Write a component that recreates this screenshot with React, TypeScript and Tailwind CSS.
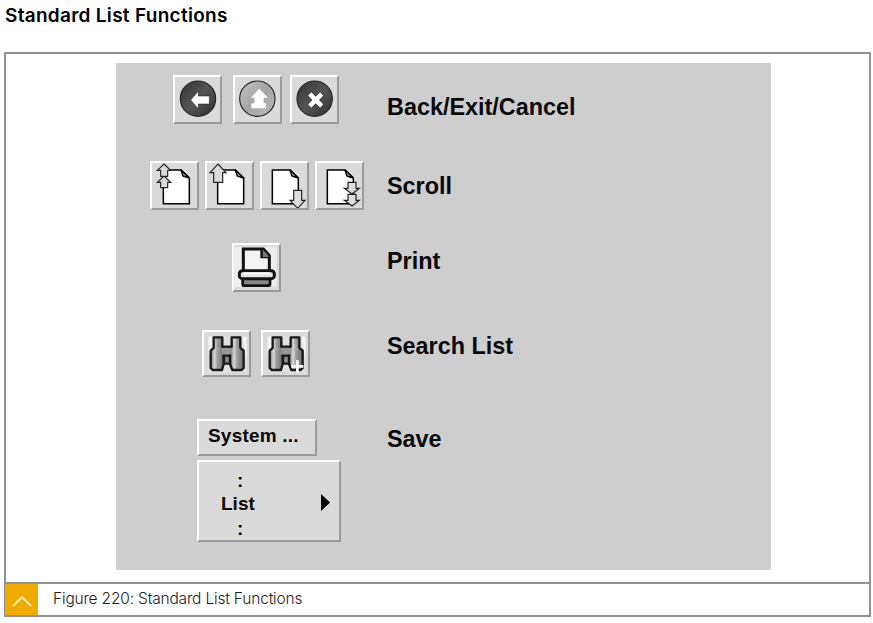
import type { ReactNode } from "react";

const raised =
  "box-border border-2 border-t-white border-l-white border-r-[#9a9a9a] border-b-[#9a9a9a] bg-[#dadada]";

function IconButton({ label, children, short = false }: { label: string; children: ReactNode; short?: boolean }) {
  return (
    <button aria-label={label} className={`${raised} w-[49px] shrink-0 overflow-hidden ${short ? "h-[47px]" : "h-[49px]"}`}>
      <svg viewBox="0 0 147 147" className="-mt-[2px] -ml-[2px] block h-[49px] w-[49px] max-w-none">
        {children}
      </svg>
    </button>
  );
}

function Disc({ cx, dark }: { cx: number; dark: boolean }) {
  const id = `disc${cx}`;
  return (
    <>
      <defs>
        <linearGradient id={id} x1="0" y1="0" x2="1" y2="1">
          <stop offset="0" stopColor={dark ? "#333" : "#c4c4c4"} />
          <stop offset="0.5" stopColor={dark ? "#555" : "#a4a4a4"} />
          <stop offset="1" stopColor={dark ? "#303030" : "#bcbcbc"} />
        </linearGradient>
      </defs>
      <circle cx={cx} cy="71" r="53" fill={`url(#${id})`} stroke="#252525" strokeWidth="3.5" />
    </>
  );
}

function Page({ left }: { left: number }) {
  const r = left + 78;
  return (
    <g fill="#fff" stroke="#000" strokeWidth="4.5">
      <path d={`M${left} 27H${r - 25}L${r} 51V128H${left}Z`} />
      <path d={`M${r - 25} 27L${r - 19} 45L${r} 51Z`} fill="#bbb" strokeLinejoin="round" />
    </g>
  );
}

function Arrow({ d }: { d: string }) {
  return <path d={d} fill="#dcdcdc" stroke="#222" strokeWidth="3.5" />;
}

function Binoculars({ id }: { id: string }) {
  return (
    <>
      <defs>
        <linearGradient id={id} x1="0" x2="1">
          <stop offset="0" stopColor="#777" />
          <stop offset="0.3" stopColor="#d8d8d8" />
          <stop offset="0.5" stopColor="#a0a0a0" />
          <stop offset="1" stopColor="#6c6c6c" />
        </linearGradient>
      </defs>
      <path d="M20 20H133V125H20Z" fill="#e0e0e0" />
      <path d="M20 72V20H31V50ZM122 20H133V94L128 53Z" fill="#f6f6f6" />
      <g stroke="#181818" strokeWidth="7" strokeLinejoin="round" fill={`url(#${id})`}>
        <path d="M35 22H61V50L65 58V102L60 120H32L26 114V62L35 54Z" />
        <path d="M89 22H115V54L125 62V114L119 120H91L84 102V58L89 50Z" />
      </g>
      <path d="M59 53H91V74H59Z" fill="#969696" />
      <path d="M61 50H89" stroke="#181818" strokeWidth="7" />
      <path d="M66 77H84V101H66Z" fill="#8a8a8a" stroke="#181818" strokeWidth="7" />
      <path d="M38 57H54M96 57H112" stroke="#b4b4b4" strokeWidth="3" />
    </>
  );
}

function Row({ icons, label, className, labelClass }: { icons: ReactNode; label: string; className: string; labelClass: string }) {
  return (
    <div className={`flex items-start ${className}`}>
      <div className="flex w-[271px] shrink-0">{icons}</div>
      <div className={`whitespace-nowrap text-[23.4px] leading-[28px] font-bold text-[#080808] ${labelClass}`}>{label}</div>
    </div>
  );
}

export default function App() {
  return (
    <main className="h-[623px] w-[873px] overflow-hidden bg-white pl-1 text-black">
      <h1 className="h-[52px] pt-[3px] pl-[1px] font-['Inter',sans-serif] text-[19px] leading-[26px] font-semibold tracking-[0.29px] whitespace-nowrap">
        Standard List Functions
      </h1>
      <figure className="flex h-[565px] w-[867px] flex-col border-2 border-[#929196]">
        <div className="h-[528px] pt-[9px] pl-[110px]">
          <div className="h-[507px] w-[655px] bg-[#cecece] pt-3 font-['Liberation_Sans',Arial,sans-serif]">
            <Row
              className="h-[86px]"
              labelClass="mt-[18px]"
              label="Back/Exit/Cancel"
              icons={
                <div className="flex pl-[57px]">
                  <IconButton label="Back">
                    <Disc cx={75} dark />
                    <path d="M53 75L76 48V63H109V87H76V102Z" fill="#fff" stroke="#111" strokeWidth="1.5" />
                  </IconButton>
                  <div className="ml-[11px] flex">
                    <IconButton label="Exit">
                      <Disc cx={73} dark={false} />
                      <path d="M79 41L53 68H64V85H55V100H99V85H92V68H105Z" fill="#fff" />
                    </IconButton>
                  </div>
                  <div className="ml-2 flex">
                    <IconButton label="Cancel">
                      <Disc cx={74} dark />
                      <path d="M59 57L95 93M95 57L59 93" stroke="#151515" strokeWidth="18" />
                      <path d="M59 57L95 93M95 57L59 93" stroke="#fff" strokeWidth="14" />
                    </IconButton>
                  </div>
                </div>
              }
            />
            <Row
              className="h-[82px]"
              labelClass="mt-[11px]"
              label="Scroll"
              icons={
                <div className="flex gap-[6px] pl-[34px]">
                  <IconButton label="First page">
                    <Page left={40} />
                    <Arrow d="M42 45L62 64H53V80H32V64H22Z" />
                    <Arrow d="M42 9L62 28H53V46H32V28H22Z" />
                  </IconButton>
                  <IconButton label="Previous page">
                    <Page left={38} />
                    <Arrow d="M39 9L63 35H53V64H26V35H15Z" />
                  </IconButton>
                  <IconButton label="Next page">
                    <Page left={37} />
                    <Arrow d="M113 142L135 118H125V88H101V118H90Z" />
                  </IconButton>
                  <IconButton label="Last page">
                    <Page left={37} />
                    <Arrow d="M111 99L133 82H123V64H99V82H88Z" />
                    <Arrow d="M111 135L133 118H123V100H99V118H88Z" />
                  </IconButton>
                </div>
              }
            />
            <Row
              className="h-[87px]"
              labelClass="mt-[4px]"
              label="Print"
              icons={
                <div className="flex pl-[116px]">
                  <IconButton label="Print">
                    <path d="M7 12H134V132H7Z" fill="#eee" />
                    <path d="M34 88V18H94L112 38V88Z" fill="#f4f4f4" stroke="#111" strokeWidth="9" />
                    <path d="M89 18V42H112" fill="#ddd" stroke="#111" strokeWidth="8" />
                    <path d="M92 20L110 39V42H92Z" fill="#777" />
                    <rect x="32" y="103" width="82" height="25" rx="3" fill="#888" stroke="#111" strokeWidth="8" />
                    <rect x="22" y="83" width="105" height="24" rx="9" fill="#e4e4e4" stroke="#111" strokeWidth="9" />
                    <path d="M35 91H113" stroke="#fff" strokeWidth="6" />
                  </IconButton>
                </div>
              }
            />
            <Row
              className="h-[89px]"
              labelClass="mt-[2px]"
              label="Search List"
              icons={
                <div className="flex gap-[10px] pl-[86px]">
                  <IconButton label="Find" short>
                    <Binoculars id="lensA" />
                  </IconButton>
                  <IconButton label="Find next" short>
                    <Binoculars id="lensB" />
                    <path d="M109 91V127M91 109H127" stroke="#fff" strokeWidth="8" />
                  </IconButton>
                </div>
              }
            />
            <Row
              className="h-[124px]"
              labelClass="mt-[6px]"
              label="Save"
              icons={
                <div className="flex flex-col gap-1 pl-[81px] text-[19px] font-bold text-[#080808]">
                  <div className={`${raised} h-[37px] w-[120px] pt-[3px] pl-[9px] leading-[24px] tracking-[0.2px] whitespace-nowrap`}>
                    System ...
                  </div>
                  <div className={`${raised} flex h-[82px] w-[144px] items-start pt-[7px] pl-[22px] leading-[24px]`}>
                    <div className="flex w-[36px] flex-col">
                      <span className="pl-[16px]">:</span>
                      <span className="-mt-px mb-px">List</span>
                      <span className="pl-[16px]">:</span>
                    </div>
                    <svg viewBox="0 0 9 17" className="mt-[25px] ml-[64px] h-[17px] w-[9px]">
                      <path d="M0 0L9 8.5L0 17Z" />
                    </svg>
                  </div>
                </div>
              }
            />
          </div>
        </div>
        <figcaption className="flex h-[33px] border-t-2 border-[#929196]">
          <div className="-ml-px flex w-[33px] items-center justify-center bg-[#f0ab00]">
            <svg viewBox="0 0 20 12" className="mt-[2px] h-3 w-5">
              <path d="M1 11L10 2L19 11" fill="none" stroke="#fff1bd" strokeWidth="1.8" />
            </svg>
          </div>
          <div className="pt-[3px] pl-[15px] font-['Inter',sans-serif] text-[15.5px] leading-[24px] font-light tracking-[-0.18px] whitespace-nowrap text-[#222]">
            Figure 220: Standard List Functions
          </div>
        </figcaption>
      </figure>
    </main>
  );
}
